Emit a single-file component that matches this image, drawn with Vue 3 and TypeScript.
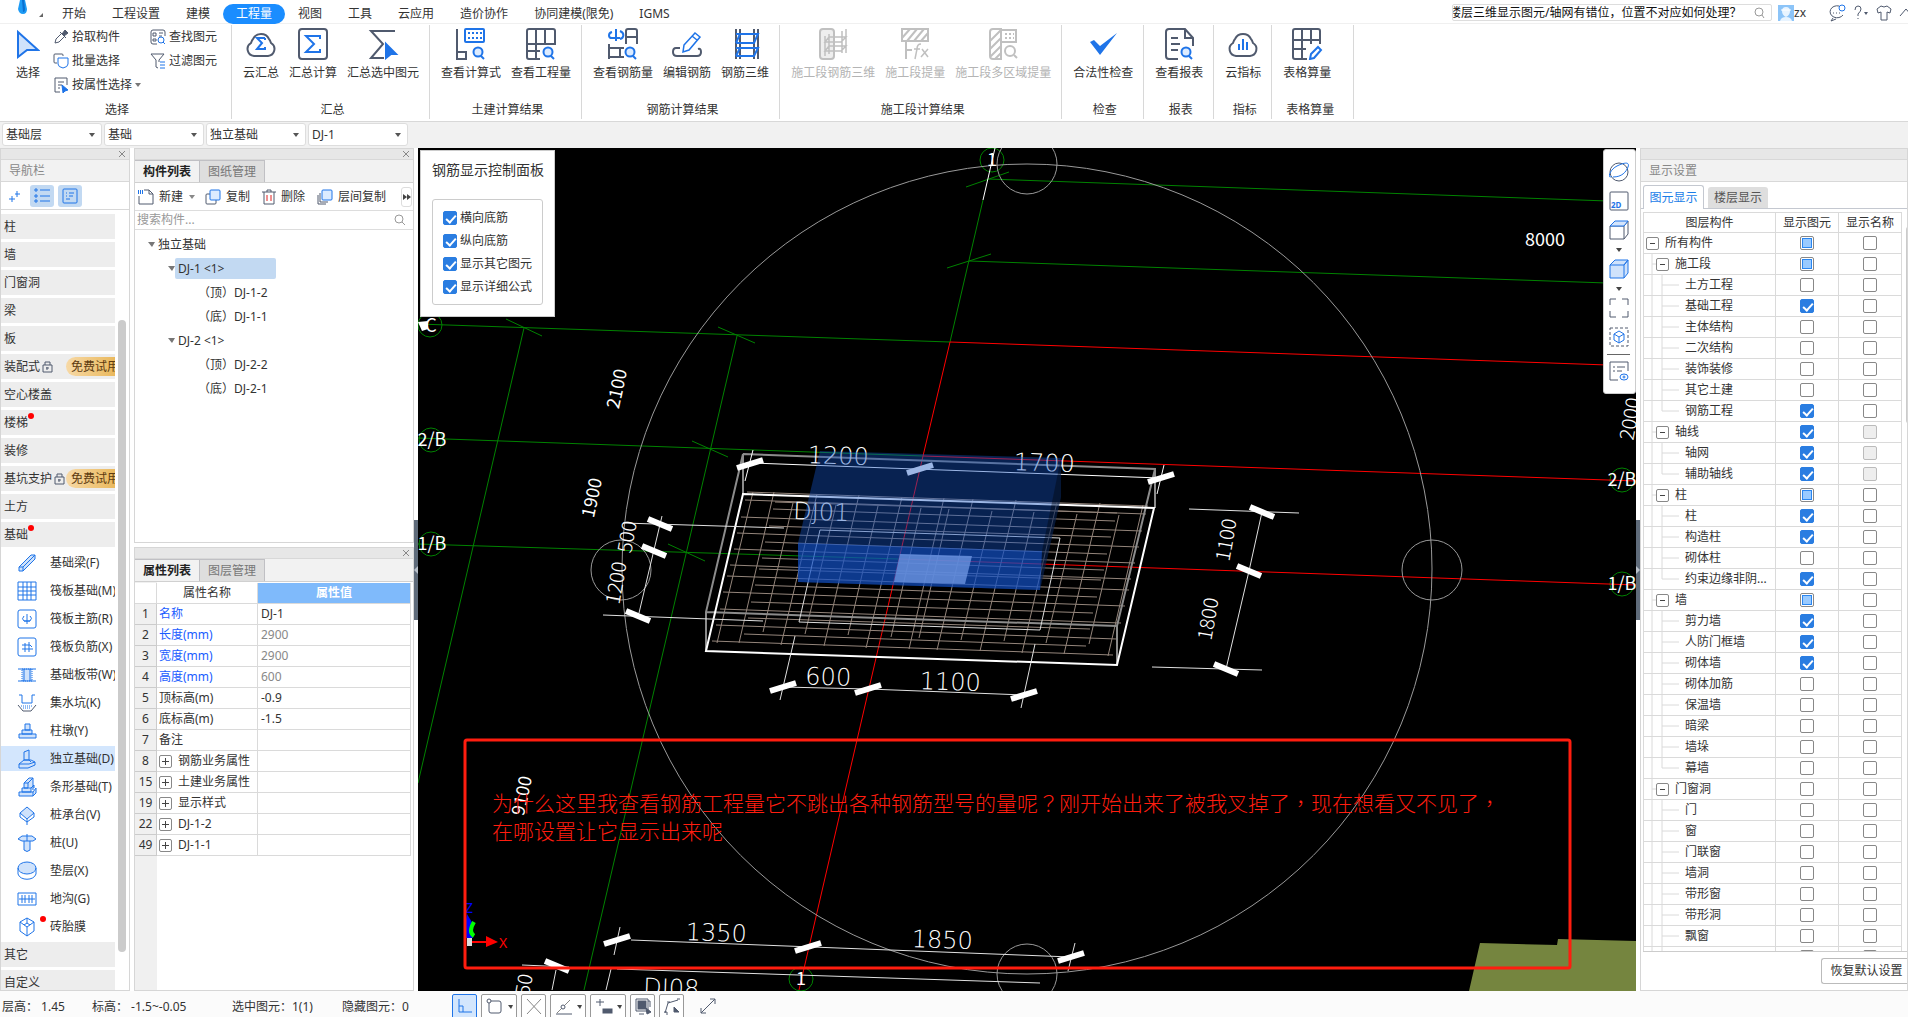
<script setup lang="ts">
import { ref } from 'vue'

interface Tool { label: string; icon: string }
interface Group { title: string; tools: Tool[]; disabled?: boolean }
interface NavItem { label: string; trial?: boolean; dot?: boolean }
interface SubItem { label: string; icon: string; active?: boolean; dot?: boolean }
interface Layer { name: string; level: number; shown: 0 | 1 | 2; locked?: boolean; last?: boolean }

const menus = ['开始', '工程设置', '建模', '工程量', '视图', '工具', '云应用', '造价协作', '协同建模(限免)', 'IGMS']
const activeMenu = ref('工程量')
const question = ref('楼层三维显示图元/轴网有错位，位置不对应如何处理？')

const lens = '<circle cx="23" cy="24" r="4.5" stroke="#1f74e8" fill="#dcebff"/><path d="M26 28l3 3" stroke="#1f74e8"/>'
const rebar = 'M7 1v30M11 1v30M25 1v30M29 1v30'

const icons: Record<string, string> = {
  cloudSum: '<path d="M9 28a7 7 0 0 1-3-13q1-3 2-4a9 9 0 0 1 16 0q1 1 2 4a7 7 0 0 1-3 13z"/><path d="M20 10h-8l5 5-5 6h8v-2M20 10v2" stroke="#1f74e8"/>',
  sum: '<rect x="2" y="1" width="28" height="30" rx="3"/><path d="M23 11V8H9l8 8-8 8h14v-3" stroke="#1f74e8"/>',
  sumPick: '<path d="M28 3H4l12 13L4 30h13"/><path d="M19 16l10 10h-5l-5 4z" fill="#1f74e8" stroke="#1f74e8"/>',
  formula: '<path d="M2 1v30h9v-7H2"/><rect x="10" y="1" width="19" height="13" rx="1" stroke="#1f74e8"/><path d="M13 5h14M13 10h14" stroke="#1f74e8" stroke-dasharray="2 2"/>' + lens,
  quantity: '<path d="M15 31H4a2 2 0 0 1-2-2V3a2 2 0 0 1 2-2h24a2 2 0 0 1 2 2v13H2M11 1v30M20 1v15M2 23h13"/>' + lens,
  rebarQty: '<path d="M9 1v12M5 4C1 5 1 10 5 10M13 3c5 2 4 7 0 8M5 10h8" stroke="#1f74e8"/><path d="M19 16V3q0-2 2-2h7q2 0 2 2v13M19 9h11M2 16v15M2 20h15M2 29h15M13 20v9"/>' + lens,
  rebarEdit: '<path d="M9 20H5q-3 0-3 4t4 4h20q4 0 4-4t-3-3"/><path d="M13 17L24 5l5 4-11 13-6 2zM21 8l5 4" stroke="#1f74e8" stroke-width="1.5"/>',
  rebar3d: `<path d="${rebar}"/><path d="M7 6h22l-4 9H7M7 20h22l-4 8H7M11 6l-4 9M11 20l-4 8" stroke="#1f74e8"/>`,
  stageRebar: '<rect x="3" y="1" width="14" height="30" rx="3" fill="#eee"/><path d="M8 8v20M12 6v20M25 3v22M29 1v24M12 9h17l-5 5H8l4-5M12 18h17l-5 5H8z" stroke-width="1.5"/>',
  stageQty: '<path d="M3 1h26v12H3zM3 10l8-9M8 13L18 1M15 13L25 1M22 13l7-8M7 13v18M7 22h6"/><path d="M22 16q-4 0-4 5l-2 10M15 21h6M23 21l6 8M29 21l-7 8" stroke-width="1.5"/>',
  stageArea: '<path d="M14 31H6a3 3 0 0 1-3-3V4a3 3 0 0 1 3-3h8zM3 13L14 2M3 21l11-11M3 29l11-11M8 31l6-6M14 2h15v12H14"/><path d="M18 6h9M18 10h9" stroke-dasharray="2 2"/><circle cx="23" cy="23" r="5"/><path d="M27 27l3 3"/>',
  check: '<path d="M3 14l4-2 6 6L30 5 13 27z" fill="#1f74e8" stroke="none"/>',
  report: '<path d="M15 31H6a3 3 0 0 1-3-3V4a3 3 0 0 1 3-3h16l8 9v8M22 2v8h8M8 10h7M8 16h9M8 22h7"/>' + lens,
  cloudBar: '<path d="M9 28a7 7 0 0 1-3-13q1-3 2-4a9 9 0 0 1 16 0q1 1 2 4a7 7 0 0 1-3 13z"/><path d="M12 16v6M16 11v11M20 14v8" stroke="#1f74e8"/>',
  sheet: '<path d="M16 31H4a2 2 0 0 1-2-2V3a2 2 0 0 1 2-2h23a2 2 0 0 1 2 2v13M2 12h27M2 21h13M11 1v30M20 1v15"/><path d="M20 26l7-7 3 3-7 8-4 1z" stroke="#1f74e8"/>',
}

const groups: Group[] = [
  { title: '汇总', tools: [{ label: '云汇总', icon: 'cloudSum' }, { label: '汇总计算', icon: 'sum' }, { label: '汇总选中图元', icon: 'sumPick' }] },
  { title: '土建计算结果', tools: [{ label: '查看计算式', icon: 'formula' }, { label: '查看工程量', icon: 'quantity' }] },
  { title: '钢筋计算结果', tools: [{ label: '查看钢筋量', icon: 'rebarQty' }, { label: '编辑钢筋', icon: 'rebarEdit' }, { label: '钢筋三维', icon: 'rebar3d' }] },
  { title: '施工段计算结果', disabled: true, tools: [{ label: '施工段钢筋三维', icon: 'stageRebar' }, { label: '施工段提量', icon: 'stageQty' }, { label: '施工段多区域提量', icon: 'stageArea' }] },
  { title: '检查', tools: [{ label: '合法性检查', icon: 'check' }] },
  { title: '报表', tools: [{ label: '查看报表', icon: 'report' }] },
  { title: '指标', tools: [{ label: '云指标', icon: 'cloudBar' }] },
  { title: '表格算量', tools: [{ label: '表格算量', icon: 'sheet' }] },
]

const smallTools: Tool[][] = [
  [
    { label: '拾取构件', icon: '<path d="M2 14l1-4 6-6 3 3-6 6zM7 3l6 6" /><path d="M9 5l3-4 3 3-4 3z" fill="#505a6e"/>' },
    { label: '批量选择', icon: '<path d="M4 10H2q-1 0-1-1V2q0-1 1-1h7q1 0 1 1v1"/><path d="M5 5h10v6q0 3-5 4-5-1-5-4z" stroke="#1f74e8"/>' },
    { label: '按属性选择', icon: '<path d="M7 15H2V1h12v7M5 5h6M5 8h4M5 11h2"/><path d="M9 8l6 5-3 1-2 2z" fill="#1f74e8" stroke="#1f74e8"/>' },
  ],
  [
    { label: '查找图元', icon: '<path d="M7 15H3q-2 0-2-2V3q0-2 2-2h10q2 0 2 2v4M3 4h3v3H3zM9 4h4M9 7h3M3 10h3v2H3z"/><circle cx="11" cy="11" r="3" stroke="#1f74e8"/><path d="M13 13l2 2" stroke="#1f74e8"/>' },
    { label: '过滤图元', icon: '<path d="M1 1h13L9 7v2M1 1l5 6v7l2 1"/><path d="M10 9h5M10 12h5M10 15h5" stroke="#1f74e8"/>' },
  ],
]

const filters = ['基础层', '基础', '独立基础', 'DJ-1']

const navItems: NavItem[] = [
  { label: '柱' }, { label: '墙' }, { label: '门窗洞' }, { label: '梁' }, { label: '板' },
  { label: '装配式', trial: true }, { label: '空心楼盖' }, { label: '楼梯', dot: true }, { label: '装修' },
  { label: '基坑支护', trial: true }, { label: '土方' }, { label: '基础', dot: true },
]
const subItems: SubItem[] = [
  { label: '基础梁(F)', icon: '<path d="M2 14L14 2h4v4L6 18H2zM2 14h4v4M6 14L18 2"/>' },
  { label: '筏板基础(M)', icon: '<path d="M1 1h18v18H1zM1 6h18M1 10h18M1 14h18M6 1v18M10 1v18M14 1v18" fill="none"/>' },
  { label: '筏板主筋(R)', icon: '<rect x="1" y="1" width="18" height="18" rx="2" fill="none"/><path d="M10 5v10M7 7q-3 3 0 5h6q3-3 0-5M7 12h6" fill="none"/>' },
  { label: '筏板负筋(X)', icon: '<rect x="1" y="1" width="18" height="18" rx="2" fill="none"/><path d="M5 8h8l2 2M5 12h11M8 6v9M12 5v10" fill="none"/>' },
  { label: '基础板带(W)', icon: '<path d="M5 4h10v12H5z" stroke-dasharray="1 1"/><path d="M1 4h18M1 16h18M7 4v12M13 4v12" fill="none"/>' },
  { label: '集水坑(K)', icon: '<path d="M2 2h3v8h10V2h3" fill="none"/><path d="M1 12l5 6h8l5-6" fill="none" stroke="#505a6e"/><path d="M4 13h12M6 15h8" stroke-dasharray="1 1"/>' },
  { label: '柱墩(Y)', icon: '<path d="M8 3h5v6H8zM5 9h10v4H5zM2 13h17v4H2z"/>' },
  { label: '独立基础(D)', icon: '<path d="M7 3l5-2v10H7zM2 15l5-4h7l4 2v3l-7 3H2z"/><path d="M2 15h10l6-2M12 11l2 2" fill="none"/>', active: true },
  { label: '条形基础(T)', icon: '<path d="M7 6l5-5h4v12M7 6h4v5H7zM5 11h9v4H5zM2 15h14v4H2zM16 15l3-4v5l-3 3M14 11l3-3v3M11 6l5-5"/>' },
  { label: '桩承台(V)', icon: '<path d="M10 2l7 6-7 6-7-6z" /><path d="M3 8v4l7 5 7-5V8M10 14v6" fill="none"/>' },
  { label: '桩(U)', icon: '<path d="M1 6l4-3h10l4 3-3 2H5zM7 8v9q3 3 6 0V8"/><path d="M10 1v7" fill="none"/>' },
  { label: '垫层(X)', icon: '<ellipse cx="10" cy="7" rx="9" ry="6"/><path d="M1 7v6c2 7 16 7 18 0V7" fill="none"/>' },
  { label: '地沟(G)', icon: '<path d="M1 4h18v12H1zM5 6v8M8 6v8M12 6v8M15 6v8M2 10h16" fill="none"/>' },
  { label: '砖胎膜', icon: '<path d="M10 1l7 4v9l-7 5-7-5V5zM3 5l7 5 7-5M10 10v9M10 1v5M7 8l3-2 3 2" fill="none"/>', dot: true },
]
const tailItems = ['其它', '自定义']

const tree = [
  { text: '独立基础', level: 0 },
  { text: 'DJ-1 <1>', level: 1, selected: true },
  { text: '（顶）DJ-1-2', level: 2 },
  { text: '（底）DJ-1-1', level: 2 },
  { text: 'DJ-2 <1>', level: 1 },
  { text: '（顶）DJ-2-2', level: 2 },
  { text: '（底）DJ-2-1', level: 2 },
]

const props = [
  { no: 1, name: '名称', value: 'DJ-1', key: true },
  { no: 2, name: '长度(mm)', value: '2900', key: true, dim: true },
  { no: 3, name: '宽度(mm)', value: '2900', key: true, dim: true },
  { no: 4, name: '高度(mm)', value: '600', key: true, dim: true },
  { no: 5, name: '顶标高(m)', value: '-0.9' },
  { no: 6, name: '底标高(m)', value: '-1.5' },
  { no: 7, name: '备注', value: '' },
  { no: 8, name: '钢筋业务属性', value: '', group: true },
  { no: 15, name: '土建业务属性', value: '', group: true },
  { no: 19, name: '显示样式', value: '', group: true },
  { no: 22, name: 'DJ-1-2', value: '', group: true },
  { no: 49, name: 'DJ-1-1', value: '', group: true },
]

const rebarOptions = ['横向底筋', '纵向底筋', '显示其它图元', '显示详细公式']

const L = (name: string, level: number, shown: 0 | 1 | 2, extra: Partial<Layer> = {}): Layer => ({ name, level, shown, ...extra })
const layers: Layer[] = [
  L('所有构件', 0, 2), L('施工段', 1, 2), L('土方工程', 2, 0), L('基础工程', 2, 1), L('主体结构', 2, 0), L('二次结构', 2, 0),
  L('装饰装修', 2, 0), L('其它土建', 2, 0), L('钢筋工程', 2, 1, { last: true }),
  L('轴线', 1, 1, { locked: true }), L('轴网', 2, 1, { locked: true }), L('辅助轴线', 2, 1, { locked: true, last: true }),
  L('柱', 1, 2), L('柱', 2, 1), L('构造柱', 2, 1), L('砌体柱', 2, 0), L('约束边缘非阴...', 2, 1, { last: true }),
  L('墙', 1, 2), L('剪力墙', 2, 1), L('人防门框墙', 2, 1), L('砌体墙', 2, 1), L('砌体加筋', 2, 0), L('保温墙', 2, 0),
  L('暗梁', 2, 0), L('墙垛', 2, 0), L('幕墙', 2, 0, { last: true }),
  L('门窗洞', 1, 0), L('门', 2, 0), L('窗', 2, 0), L('门联窗', 2, 0), L('墙洞', 2, 0), L('带形窗', 2, 0), L('带形洞', 2, 0),
  L('飘窗', 2, 0), L('', 2, 0),
]

const viewTools = [
  { name: '动态观察', icon: '<circle cx="10" cy="10" r="9"/><path d="M3 14C-2 18 0 8 8 4s13-4 11 1-6 10-15 10" stroke="#1f74e8"/>' },
  { name: '二维', icon: '<rect x="1" y="1" width="18" height="18" rx="1"/><text x="2" y="17" font-size="8" font-weight="700" fill="#1f74e8" stroke="none">2D</text>' },
  { name: '视图方向', more: true, icon: '<path d="M1 6h14v13H1zM15 6l4-5v13l-4 5"/><path d="M1 6l5-5h13l-4 5z" fill="#d5e5fb" stroke="#1f74e8"/>' },
  { name: '显示模式', more: true, icon: '<path d="M1 6h14v13H1zM15 6l4-5v13l-4 5M1 6l5-5h13l-4 5" fill="#cfe2fb" stroke="#1f74e8"/>' },
  { name: '全屏', icon: '<path d="M1 7V1h6M13 1h6v6M19 13v6h-6M7 19H1v-6"/>' },
  { name: '局部三维', icon: '<rect x="1" y="1" width="18" height="18" stroke-dasharray="3 2"/><path d="M10 4l5 3v6l-5 3-5-3V7zM5 7l5 3 5-3M10 10v6" stroke="#1f74e8"/>' },
]

const bottomTools = [
  { on: true, icon: '<path d="M3 1v13h13M3 8h4v6" stroke="#1f74e8"/>' },
  { more: true, icon: '<rect x="3" y="3" width="12" height="12" rx="2"/><circle cx="3" cy="3" r="2" fill="#fff"/>' },
  { icon: '<path d="M2 1l14 15M16 1L2 16" stroke="#888"/>' },
  { more: true, icon: '<path d="M2 15L15 2" stroke="#888"/><path d="M1 16h16"/><circle cx="8" cy="9" r="2" fill="#fff"/>' },
  { more: true, icon: '<path d="M1 4h8M5 1v7"/><rect x="8" y="11" width="9" height="4" fill="#505a6e"/>' },
  { icon: '<path d="M14 3h2v6M5 16h5M2 1h12v12H2z"/><rect x="4" y="3" width="8" height="8" fill="#505a6e"/><path d="M12 10l5 4-4 2z" fill="#505a6e"/>' },
  { icon: '<path d="M2 15l3-10 10-3M1 14h3v3M4 4h3M14 1h3"/><path d="M11 9l5 5h-5z" fill="#505a6e"/>' },
]

// Rebar mesh of the selected footing, in scene coordinates.
const fx = (x: number) => Math.round(660 + x / 2.45)
const fy = (y: number) => Math.round(430 + y / 3)
const seg = (a: number, b: number, c: number, d: number) => `M${fx(a)} ${fy(b)}L${fx(c)} ${fy(d)}`
const meshPath = [
  ...[186, 211, 260, 308, 357, 406, 438, 487, 537, 585, 634].map((y) => {
    const x = 208 - (y - 211) * 0.19
    return seg(x, y, x + 983, y + 42)
  }),
  ...[215, 238, 287, 336, 385, 416, 466, 515, 563, 612].map((y) => {
    const x = 281 - (y - 215) * 0.19
    return seg(x, y, x + 838, y + 35)
  }),
  ...[227, 280, 384, 488, 592, 697, 766, 871, 973, 1078, 1184].map((x) => {
    const y = 185 + (x - 227) * 0.041
    return seg(x, y, x - 87, y + 453)
  }),
  ...[252, 355, 460, 565, 634, 738, 842, 946, 1050].map((x) => {
    const y = 607 + (x - 252) * 0.045
    return seg(x + 75, y - 387, x, y)
  }),
].join('')

const circles = [[1027, 164], [621, 570], [1432, 570], [1027, 974]]
const bubbles = [[430, 325], [431, 440], [431, 544], [992, 160], [801, 979], [1622, 480], [1622, 584]]
const slashes = [[750, 464], [920, 469], [1161, 478], [783, 687], [868, 689], [1024, 695], [617, 940], [808, 947], [1071, 957]]
const backslashes = [[1262, 512], [1249, 571], [1226, 669], [660, 524], [654, 551], [638, 616], [557, 966]]
const slashPath = slashes.map(([x, y]) => `M${x - 13} ${y + 4}l26-8`).join('') + backslashes.map(([x, y]) => `M${x - 12} ${y - 5}l24 10`).join('')
const axisLabels = [
  { t: 'C', x: 431, y: 332, r: 0 }, { t: '2/B', x: 432, y: 446, r: 0 }, { t: '1/B', x: 432, y: 550, r: 0 },
  { t: '1', x: 992, y: 166, r: 0 }, { t: '1', x: 801, y: 985, r: 0 }, { t: '2/B', x: 1622, y: 486, r: 0 }, { t: '1/B', x: 1622, y: 590, r: 0 },
  { t: '8000', x: 1545, y: 246, r: 0 },
  { t: '2100', x: 623, y: 390, r: -78 }, { t: '1900', x: 598, y: 499, r: -78 }, { t: '9100', x: 528, y: 797, r: -78 },
]
const dimLabels = [
  { t: '1200', x: 838, y: 464, r: 2 }, { t: '1700', x: 1044, y: 471, r: 2 }, { t: 'DJ01', x: 821, y: 520, r: 2 },
  { t: '600', x: 828, y: 685, r: 2 }, { t: '1100', x: 950, y: 690, r: 2 },
  { t: '1350', x: 716, y: 941, r: 2 }, { t: '1850', x: 942, y: 948, r: 2 }, { t: 'DJ08', x: 671, y: 996, r: 2 },
  { t: '1100', x: 1233, y: 541, r: -80 }, { t: '1800', x: 1215, y: 620, r: -80 },
  { t: '500', x: 634, y: 538, r: -80 }, { t: '1200', x: 623, y: 584, r: -80 }, { t: '650', x: 530, y: 991, r: -80 }, { t: '2000', x: 1637, y: 420, r: -80 },
]
</script>

<template>
  <div class="app">
    <header class="top">
      <svg class="logo" width="49" height="23" viewBox="0 0 49 23" aria-hidden="true">
        <path d="M20 0h5l2 9q0 5-4 5t-5-5z" fill="#1d9bf5" /><path d="M22 0h2l1 9q0 3-2 3z" fill="#0a6fd0" />
        <path d="M43 13v4h-4z" fill="#666" />
      </svg>
      <nav class="menu">
        <button v-for="m in menus" :key="m" :class="{ on: m === activeMenu }" @click="activeMenu = m">{{ m }}</button>
      </nav>
      <div class="search">
        <input v-model="question" type="text" aria-label="搜索问题" />
        <svg class="ln" width="14" height="14" viewBox="0 0 14 14" stroke="#aaa"><circle cx="7" cy="6" r="4" /><path d="M10 9l2 3" /></svg>
      </div>
      <div class="user">
        <svg width="16" height="16" viewBox="0 0 16 16"><path d="M0 0h16v16H0z" fill="#8cc4f8" /><path d="M4 6a4 4 0 0 1 8 0q0 4-4 6-4-2-4-6M2 16q1-4 6-4t6 4z" fill="#e8f4ff" /><path d="M3 5h10" stroke="#fff" /></svg>
        <span>zx</span>
      </div>
      <div class="corner">
        <svg class="ln" width="18" height="18" viewBox="0 0 18 18"><path d="M11 2a7 6 0 1 0 4 9M5 14l-2 3 5-2" /><path d="M5 9h1M8 9h1M11 9h1" /><circle cx="14" cy="4" r="3" stroke="#1f74e8" /></svg>
        <svg class="ln" width="16" height="18" viewBox="0 0 16 18"><path d="M2 6q0-4 3-4t3 3q0 2-3 5v2M5 14v1" /><path d="M11 8h4l-2 3z" fill="#505a6e" stroke="none" /></svg>
        <svg class="ln" width="16" height="18" viewBox="0 0 16 18"><path d="M5 2q3 2 6 0l4 3-1 4-3-1v8H5V8L2 9 1 5z" /></svg>
        <svg class="ln" width="9" height="18" viewBox="0 0 9 18"><path d="M1 12l6-7 6 7" /></svg>
      </div>
    </header>

    <section class="ribbon">
      <div class="group first">
        <div class="tools">
          <button class="tool pick">
            <svg width="24" height="30" viewBox="0 0 24 30"><path d="M2 3l20 18H11l-9 7z" fill="#cfe2fb" stroke="#1f74e8" stroke-width="2" /></svg>
            <span>选择</span>
          </button>
          <div v-for="(col, i) in smallTools" :key="i" class="col">
            <button v-for="t in col" :key="t.label" class="small">
              <svg class="ln" width="16" height="16" viewBox="0 0 16 16" v-html="t.icon"></svg>{{ t.label }}
              <svg v-if="t.label === '按属性选择'" width="6" height="4"><path d="M0 0h6L3 4z" fill="#777" /></svg>
            </button>
          </div>
        </div>
        <div class="gtitle">选择</div>
      </div>
      <div v-for="g in groups" :key="g.title" class="group" :class="{ off: g.disabled }">
        <div class="tools">
          <button v-for="t in g.tools" :key="t.label" class="tool" :disabled="g.disabled">
            <svg class="ln big" width="32" height="32" viewBox="0 0 32 32" v-html="icons[t.icon]"></svg>
            <span>{{ t.label }}</span>
          </button>
        </div>
        <div class="gtitle">{{ g.title }}</div>
      </div>
    </section>

    <div class="filters">
      <div v-for="f in filters" :key="f" class="filter">
        <select :aria-label="f"><option>{{ f }}</option></select>
        <svg width="6" height="4"><path d="M0 0h6L3 4z" fill="#555" /></svg>
      </div>
    </div>

    <main class="work">
      <aside class="panel nav">
        <div class="strip"><button aria-label="关闭"><svg width="8" height="8" viewBox="0 0 8 8"><path d="M1 1l6 6M7 1L1 7" stroke="#888" /></svg></button></div>
        <div class="ptitle">导航栏</div>
        <div class="navbar">
          <button aria-label="展开"><svg class="bl" width="12" height="12" viewBox="0 0 12 12"><path d="M0 9h6M3 6v6M6 4h5M8 1v6" /></svg></button>
          <button class="on" aria-label="列表"><svg class="bl" width="16" height="16" viewBox="0 0 16 16"><path d="M1 1h2v2H1zM1 7h2v2H1zM1 12h2v2H1zM6 2h10M6 8h10M6 13h10" /></svg></button>
          <button class="on" aria-label="卡片"><svg class="bl" width="16" height="16" viewBox="0 0 16 16"><rect x="1" y="1" width="14" height="14" rx="1" /><path d="M4 5h1M7 5h5M4 8h1M7 8h4M4 11h4" /></svg></button>
        </div>
        <div class="navbody">
          <div class="navlist">
            <button v-for="n in navItems" :key="n.label" class="cat">
              <span>{{ n.label }}<i v-if="n.dot" class="dot"></i></span>
              <svg v-if="n.trial" class="ln" width="11" height="12" viewBox="0 0 11 12"><path d="M1 4h9v7H1zM3 4V1h5v3M5 6v3M4 7h3" /></svg>
              <em v-if="n.trial">免费试用</em>
            </button>
            <button v-for="s in subItems" :key="s.label" class="sub" :class="{ on: s.active }">
              <svg width="20" height="20" viewBox="0 0 20 20" fill="#cfe2fb" stroke="#1f74e8" v-html="s.icon"></svg>
              <i v-if="s.dot" class="dot"></i>
              <span>{{ s.label }}</span>
            </button>
            <button v-for="n in tailItems" :key="n" class="cat"><span>{{ n }}</span></button>
          </div>
          <div class="navscroll"><div></div></div>
        </div>
      </aside>

      <div class="mid">
        <section class="panel comps">
          <div class="strip"><button aria-label="关闭"><svg width="8" height="8" viewBox="0 0 8 8"><path d="M1 1l6 6M7 1L1 7" stroke="#888" /></svg></button></div>
          <div class="tabs"><button class="on">构件列表</button><button>图纸管理</button></div>
          <div class="actions">
            <button><svg class="ln" width="16" height="16" viewBox="0 0 16 16"><path d="M6 1h5l4 4v10H1V7M11 1v4h4" /><path d="M0 2h5M0 4h5" stroke="#1f74e8" stroke-width="2" stroke-dasharray="1 1" /></svg>新建</button>
            <svg class="tri" width="6" height="4"><path d="M0 0h6L3 4z" fill="#888" /></svg>
            <button><svg class="ln" width="16" height="16" viewBox="0 0 16 16"><path d="M5 5H2q-1 0-1 1v8q0 1 1 1h8q1 0 1-1v-3" /><rect x="5" y="1" width="10" height="10" rx="1" fill="#dcebff" stroke="#1f74e8" /></svg>复制</button>
            <button><svg class="ln" width="14" height="16" viewBox="0 0 14 16"><path d="M0 3h14M2 3v12h10V3M5 3V1h4v2" /><path d="M5 6v6M9 6v6" stroke="#e02020" /></svg>删除</button>
            <button><svg class="ln" width="16" height="16" viewBox="0 0 16 16"><path d="M1 6v9h8M3 4v9h8" /><rect x="5" y="1" width="10" height="10" rx="1" fill="#dcebff" stroke="#1f74e8" /></svg>层间复制</button>
            <button class="more" aria-label="更多"><svg width="8" height="6"><path d="M0 0l4 3-4 3zM4 0l4 3-4 3z" fill="#444" /></svg></button>
          </div>
          <div class="find">
            <input type="text" placeholder="搜索构件..." aria-label="搜索构件" />
            <svg class="ln" width="12" height="12" viewBox="0 0 12 12" stroke="#999"><circle cx="5" cy="5" r="4" /><path d="M8 8l3 3" /></svg>
          </div>
          <ul class="tree">
            <li v-for="(t, i) in tree" :key="i" :class="['lv' + t.level, { on: t.selected }]">
              <svg v-if="t.level < 2" width="7" height="5"><path d="M0 0h7L4 5z" fill="#777" /></svg>
              <span>{{ t.text }}</span>
            </li>
          </ul>
        </section>

        <section class="panel props">
          <div class="strip"><button aria-label="关闭"><svg width="8" height="8" viewBox="0 0 8 8"><path d="M1 1l6 6M7 1L1 7" stroke="#888" /></svg></button></div>
          <div class="tabs"><button class="on">属性列表</button><button>图层管理</button></div>
          <div class="sheet">
            <table>
              <thead><tr><th class="no"></th><th class="pn">属性名称</th><th class="pv">属性值</th></tr></thead>
              <tbody>
                <tr v-for="p in props" :key="p.no">
                  <td class="no">{{ p.no }}</td>
                  <td :class="{ key: p.key }"><div class="cell"><button v-if="p.group" class="exp" aria-label="展开"><svg width="7" height="7"><path d="M0 3h7v1H0zM3 0h1v7H3z" fill="#444" /></svg></button>{{ p.name }}</div></td>
                  <td :class="{ dim: p.dim }">{{ p.value }}</td>
                </tr>
              </tbody>
            </table>
          </div>
        </section>
        <div class="grip left"><div><svg width="4" height="8"><path d="M4 0v8L0 4z" fill="#b8c0ca" /></svg></div></div>
      </div>

      <section class="view">
        <svg class="scene" viewBox="418 148 1218 843" preserveAspectRatio="xMidYMid slice" fill="none">
          <path d="M1480 943l77 2 1-6 78 2v50H1469z" fill="#75853f" />
          <g stroke="#008200">
            <path d="M418 324L950 342M418 438L923 456M418 544L899 559M524 328L418 783M737 336L584 990M983 200L950 342M988 179L1636 202M969 261L1636 284" />
            <path d="M966 187l43-15M947 268l44-14M506 319l36 17M718 327l37 16M692 441l36 16M668 544l37 17" />
            <circle v-for="b in bubbles" :key="b.join()" :cx="b[0]" :cy="b[1]" r="12" />
          </g>
          <path d="M950 342L1636 366M923 456L1636 481M899 559L1636 585M950 342L923 456L899 559L799 990" stroke="#ff0000" />
          <g stroke="#999">
            <circle cx="1027" cy="569" r="405" />
            <circle v-for="c in circles" :key="c.join()" :cx="c[0]" :cy="c[1]" r="30" />
          </g>
          <path :d="meshPath" stroke="#94857b" />
          <path d="M743 454L1155 469V508M743 494V454L706 612V651M706 612L1117 626V665M1155 469L1117 626" stroke="#8c8c8c" stroke-width="2" />
          <path d="M743 494L1154 508L1117 665L706 651Z" stroke="#fff" stroke-width="2" />
          <path d="M820 530L1060 538L1040 630L799 622Z" stroke="#ddd" />
          <g stroke="#e0e0e0">
            <path d="M995 148L983 200M752 463L1160 478M753 450l-8 31M1164 465l-7 29" stroke="#fff" />
            <path d="M1262 512L1249 571L1226 669M1189 509l110 4M1152 667l110 3" />
            <path d="M783 687L868 689L1024 695M795 636l-15 64M1035 644l-14 64" />
            <path d="M623 523L784 528M603 615L763 621M662 516L639 613" />
            <path d="M631 940L1071 957M620 927l-6 28M1075 943l-7 28M522 965l47 2M556 970l-4 20M617 969L1040 983M611 969l-5 21" />
          </g>
          <path :d="slashPath" stroke="#fff" stroke-width="6" />
          <path d="M418 322l10-1v8l-6 2z" fill="#fff" />
          <g class="dims"><text v-for="(d, i) in dimLabels" :key="i" :x="d.x" :y="d.y" :class="{ upright: d.r < 0 }" :transform="`rotate(${d.r} ${d.x} ${d.y})`">{{ d.t }}</text></g>
          <g class="axes"><text v-for="(d, i) in axisLabels" :key="i" :x="d.x" :y="d.y" :transform="`rotate(${d.r} ${d.x} ${d.y})`">{{ d.t }}</text></g>
          <path d="M820 451L1061 458V497L1040 590L798 582V543Z" fill="#1250c0" fill-opacity=".42" />
          <path d="M1061 458V497L1040 590L1042 551Z" fill="#000" fill-opacity=".35" />
          <path d="M798 543L1042 551L1040 590L798 582Z" fill="#1250c8" fill-opacity=".5" />
          <path d="M900 554L972 556L965 584L894 582Z" fill="#6b94e0" fill-opacity=".8" />
          <path d="M467 914l6 10v14h-8v-13z" fill="#00f" /><path d="M474 922q-6 10 0 14" stroke="#0f0" stroke-width="4" />
          <path d="M467 938h5v8h-5z" fill="#ddd" /><path d="M472 941h14v-5l12 6-12 5v-4h-14z" fill="#f00" />
          <text class="zx" x="465" y="913" fill="#00f">Z</text><text class="zx" x="499" y="948" fill="#f00">X</text>
          <rect x="465" y="740" width="1105" height="228" rx="2" stroke="#ff1d0f" stroke-width="3" />
          <g class="note">
            <text x="492" y="811">为什么这里我查看钢筋工程量它不跳出各种钢筋型号的量呢<tspan class="tc">？</tspan>刚开始出来了被我叉掉了<tspan class="tc">，</tspan>现在想看又不见了<tspan class="tc">，</tspan></text>
            <text x="492" y="839">在哪设置让它显示出来呢</text>
          </g>
        </svg>

        <div class="rebarbox">
          <h2>钢筋显示控制面板</h2>
          <div class="opts">
            <label v-for="o in rebarOptions" :key="o"><input type="checkbox" checked />{{ o }}</label>
          </div>
        </div>

        <div class="viewbar">
          <button v-for="v in viewTools" :key="v.name" :class="{ tall: v.more }" :aria-label="v.name">
            <svg class="ln" width="20" height="20" viewBox="0 0 20 20" v-html="v.icon"></svg>
            <svg v-if="v.more" width="6" height="4"><path d="M0 0h6L3 4z" fill="#444" /></svg>
          </button>
          <hr />
          <button aria-label="显示设置"><svg class="ln" width="20" height="20" viewBox="0 0 20 20"><path d="M9 19H1V1h18v9M4 6h2M8 6h8M4 10h2M8 10h5" /><ellipse cx="15" cy="16" rx="4" ry="3" stroke="#1f74e8" /><circle cx="15" cy="16" r="1" stroke="#1f74e8" /></svg></button>
        </div>
      </section>

      <div class="grip right"><div><svg width="4" height="8"><path d="M0 0v8l4-4z" fill="#b8c0ca" /></svg></div></div>

      <aside class="panel display">
        <div class="strip"></div>
        <div class="ptitle">显示设置</div>
        <div class="rtabs"><button class="on">图元显示</button><button>楼层显示</button></div>
        <div class="layers">
          <table>
            <thead><tr><th class="lname">图层构件</th><th>显示图元</th><th>显示名称</th></tr></thead>
            <tbody>
              <tr v-for="(l, i) in layers" :key="i">
                <td>
                  <div class="lrow" :class="'d' + l.level">
                    <svg v-if="l.level === 1" width="12" height="20"><path d="M8 0v20M8 10h4" /></svg>
                    <svg v-if="l.level === 2" width="35" height="20"><path :d="l.last ? 'M8 0v20M18 0v10h17' : 'M8 0v20M18 0v20M18 10h17'" /></svg>
                    <button v-if="l.level < 2" class="exp" aria-label="折叠"><svg width="7" height="7"><path d="M1 3h5v1H1z" fill="#444" stroke="none" /></svg></button>
                    <span>{{ l.name }}</span>
                  </div>
                </td>
                <td class="c"><input type="checkbox" :aria-label="l.name + '显示图元'" :checked="l.shown === 1" :indeterminate="l.shown === 2" /></td>
                <td class="c"><input type="checkbox" :aria-label="l.name + '显示名称'" :disabled="l.locked" /></td>
              </tr>
            </tbody>
          </table>
          <div class="thumb"></div>
        </div>
        <div class="foot"><button>恢复默认设置</button></div>
      </aside>
    </main>

    <footer class="status">
      <span class="s1">层高： 1.45</span><span class="s2">标高： -1.5~-0.05</span><span class="s3">选中图元：1(1)</span><span class="s4">隐藏图元：0</span>
      <div class="btools">
        <button v-for="(b, i) in bottomTools" :key="i" :class="{ on: b.on, wide: b.more }" :aria-label="'捕捉' + (i + 1)">
          <svg class="ln" width="18" height="18" viewBox="0 0 18 18" v-html="b.icon"></svg>
          <svg v-if="b.more" width="5" height="4"><path d="M0 0h5L3 4z" fill="#444" /></svg>
        </button>
        <svg class="ln full" width="16" height="16" viewBox="0 0 16 16"><path d="M1 15L15 1M10 1h5v5M1 10v5h5" /></svg>
      </div>
    </footer>
  </div>
</template>

<style>
body { background: #fbfbfb; overflow: hidden; }
</style>

<style scoped>
.app { height: 100vh; display: flex; flex-direction: column; font: 12px/18px "Noto Sans", "Noto Sans CJK SC", sans-serif; color: #333; background: #fff; overflow: hidden; white-space: nowrap; }
.app * { box-sizing: border-box; }
button, input, select { font: inherit; color: inherit; background: none; border: 0; padding: 0; margin: 0; outline: 0; }
svg { flex: none; display: block; }
.ln { fill: none; stroke: #505a6e; }
.ln[stroke] { stroke: #999; }
.big { stroke-width: 2; }
.bl { fill: none; stroke: #1f74e8; }

.top { display: flex; height: 24px; flex: none; border-bottom: 1px solid #f0f0f0; align-items: center; }
.menu { display: flex; padding-top: 4px; }
.menu button { padding: 0 13px; height: 20px; line-height: 19px; border-radius: 10px; }
.menu button.on { background: #1a8dff; color: #fff; }
.search { margin-left: auto; flex: none; width: 320px; height: 17px; border: 1px solid #ddd; border-radius: 2px; display: flex; align-items: center; justify-content: space-between; padding-right: 5px; margin-top: 2px; }
.search input { width: 289px; line-height: 15px; height: 15px; text-indent: -4px; color: #111; }
.user { display: flex; align-items: center; margin: 2px 22px 0 6px; flex: none; }
.corner { display: flex; gap: 7px; margin-top: 2px; flex: none; }

.ribbon { display: flex; flex: none; height: 98px; padding-top: 1px; border-bottom: 1px solid #d8d8d8; }
.group { height: 94px; padding: 3px 10px 0 11px; border-right: 1px solid #d8d8d8; display: flex; flex-direction: column; justify-content: space-between; }
.group.first { width: 232px; padding: 0; }
.group:last-child { padding-right: 19px; }
.tools { display: flex; gap: 10px; }
.tool { display: flex; flex-direction: column; align-items: center; gap: 4px; }
.off .tool { color: #b4b4b4; }
.off .ln { stroke: #c0c0c0; }
.gtitle { text-align: center; padding-left: 3px; }
.first .tools { gap: 0; }
.pick { margin-left: 16px; width: 24px; padding-top: 4px; gap: 5px; align-self: flex-start; }
.col { margin-left: 13px; }
.col + .col { margin-left: 9px; }
.col .small { display: flex; align-items: center; gap: 3px; height: 24px; }

.filters { display: flex; gap: 2px; flex: none; height: 26px; padding: 1px 2px; background: #f1f1f1; }
.filter { width: 100px; height: 23px; border: 1px solid #ddd; border-radius: 3px; background: #fff; display: flex; align-items: center; padding-right: 6px; }
.filter select { appearance: none; flex: 1; padding-left: 3px; height: 20px; }

.work { flex: 1; min-height: 0; display: grid; grid-template-columns: 130px 288px minmax(0, 1fr) 4px 268px; }
.panel { border: 1px solid #d6d6d6; background: #fff; display: flex; flex-direction: column; min-height: 0; overflow: hidden; }
.strip { flex: none; height: 11px; background: #e7e7e7; border-bottom: 1px solid #d8d8d8; padding-right: 3px; }
.strip button { display: block; margin: 1px 0 0 auto; }
.ptitle { flex: none; height: 22px; line-height: 22px; padding-left: 8px; background: #f2f2f2; border-bottom: 1px solid #d8d8d8; color: #888; }
.navbar { display: flex; gap: 4px; flex: none; height: 28px; padding: 3px 0 0 5px; border-bottom: 1px solid #d8d8d8; }
.navbar button { width: 24px; height: 22px; border-radius: 3px; display: flex; align-items: center; justify-content: center; }
.navbar button:first-child { width: 20px; padding-right: 3px; }
.navbar .on { background: #c2d9f2; }
.navbody { flex: 1; min-height: 0; display: flex; padding-top: 4px; }
.navlist { width: 114px; display: flex; flex-direction: column; gap: 3px; overflow: hidden; }
.cat { flex: none; position: relative; height: 25px; background: #ededed; display: flex; align-items: center; padding-left: 3px; overflow: hidden; gap: 2px; }
.cat span { position: relative; }
.cat em { position: absolute; left: 65px; right: 0; top: 3px; font-style: normal; height: 19px; line-height: 19px; overflow: hidden; padding-left: 5px; border-radius: 10px 0 0 10px; background: linear-gradient(90deg, #f7d9a6, #eab95e); color: #5c3a10; text-align: left; }
.dot { width: 6px; height: 6px; border-radius: 3px; background: #f00; position: absolute; left: 24px; top: -1px; }
.sub { flex: none; position: relative; height: 25px; display: flex; align-items: center; gap: 13px; padding-left: 16px; overflow: hidden; text-align: left; }
.sub.on { background: #d3e6fd; }
.sub .dot { left: 39px; top: 2px; }
.navscroll { width: 14px; padding: 106px 2px 38px 3px; }
.navscroll div { height: 100%; width: 8px; border-radius: 4px; background: #cbcbcb; }

.mid { display: grid; grid-template-columns: 280px 4px; grid-template-rows: 395px minmax(0, 1fr); row-gap: 4px; padding-left: 4px; min-height: 0; }
.comps, .props { grid-column: 1; }
.grip { padding-top: 372px; background: #fff; }
.grip.left { grid-column: 2; grid-row: 1 / 3; }
.grip div { height: 100px; width: 4px; background: #5f6b7a; display: flex; align-items: center; }
.tabs { flex: none; display: flex; height: 23px; background: #f2f2f2; border-bottom: 1px solid #d0d0d0; }
.tabs button { width: 65px; border-right: 1px solid #c0c0c4; border-top: 1px solid #c0c0c4; background: #dedede; color: #777; }
.tabs .on { background: #f2f2f2; color: #222; font-weight: 700; }
.actions { flex: none; display: flex; align-items: center; gap: 12px; height: 28px; border-bottom: 1px solid #ddd; padding-left: 3px; }
.actions button { display: flex; align-items: center; gap: 5px; }
.actions .tri { margin-left: -6px; margin-right: -2px; }
.actions .more { margin-left: auto; width: 11px; height: 20px; border: 1px solid #ddd; border-radius: 3px; justify-content: center; margin-right: 1px; }
.find { flex: none; display: flex; align-items: center; height: 19px; border-bottom: 1px solid #ddd; padding: 0 7px 0 2px; }
.find input { flex: 1; height: 17px; }
.find input::placeholder { color: #999; }
.tree { list-style: none; margin: 0; padding: 2px 0 0; }
.tree li { height: 24px; display: flex; align-items: center; padding-left: 13px; }
.tree span { padding: 0 3px; height: 21px; line-height: 21px; border-radius: 2px; }
.tree .lv1 { padding-left: 33px; }
.tree .lv2 { padding-left: 60px; }
.tree .on span { width: 101px; background: #c2d9f2; }

.sheet { flex: 1; display: flex; padding: 1px 2px 0 0; background: linear-gradient(90deg, #f0f0f0 22px, #fff 22px); }
table { border-collapse: separate; border-spacing: 0; table-layout: fixed; align-self: flex-start; background: #fff; }
td, th { height: 21px; padding: 0; border-right: 1px solid #dadada; border-bottom: 1px solid #dadada; font-weight: 400; line-height: 20px; overflow: hidden; }
.sheet table { width: 276px; }
.sheet td { padding-left: 3px; }
.sheet .no { width: 22px; text-align: center; padding: 0; }
.sheet td.no { background: #f0f0f0; border-color: #ccc; }
.pn { width: 101px; }
.pv { background: #7fbafb; color: #fff; font-weight: 700; }
.sheet .key { color: #1a5cff; }
.sheet .dim { color: #888; }
.cell { display: flex; align-items: center; gap: 6px; margin-left: -1px; height: 20px; }
.exp { width: 13px; height: 13px; flex: none; border: 1px solid #888; border-radius: 2px; display: flex; align-items: center; justify-content: center; background: #fff; }

.view { position: relative; background: #000; overflow: hidden; }
.scene { position: absolute; inset: 0; width: 100%; height: 100%; }
.axes, .dims, .note { font-family: "Noto Sans CJK SC", sans-serif; }
.axes { font-size: 18px; fill: #fff; text-anchor: middle; }
.dims { font-family: "DejaVu Sans", sans-serif; font-weight: 200; font-size: 24px; fill: #fff; text-anchor: middle; }
.dims .upright { font-size: 20px; font-family: "Noto Sans CJK SC", sans-serif; font-weight: 300; }
.zx { font-size: 14px; }
.note { font-size: 21px; font-weight: 300; fill: #ff1d0f; }
.tc { font-family: "Noto Sans CJK TC", sans-serif; }
.rebarbox { position: absolute; left: 2px; top: 2px; background: #fff; border: 1px solid #ccc; padding: 9px 11px; width: 135px; height: 167px; }
.rebarbox h2 { margin: 0 0 19px; font-size: 14px; line-height: 20px; font-weight: 400; }
.opts { border: 1px solid #ccc; border-radius: 3px; width: 111px; height: 106px; padding: 6px 10px; }
.opts label { display: flex; align-items: center; gap: 3px; height: 23px; }

input[type="checkbox"] { appearance: none; flex: none; width: 14px; height: 14px; border: 1px solid #888; border-radius: 2px; background: #fff; position: relative; display: block; }
input[type="checkbox"]:disabled { background: #eee; border-color: #bbb; }
input[type="checkbox"]:checked { background: #2a7de1; border-color: #2a7de1; }
input[type="checkbox"]:checked::after { content: ""; position: absolute; left: 4px; top: 1px; width: 4px; height: 8px; border: solid #fff; border-width: 0 2px 2px 0; transform: rotate(42deg); }
input[type="checkbox"]:indeterminate::after { content: ""; position: absolute; inset: 1px; background: #99caff; border: 1px solid #2a86f0; }

.viewbar { position: absolute; right: 0; top: 1px; width: 33px; height: 245px; background: #fff; border: 1px solid #ccc; border-radius: 3px; padding: 7px 2px 0 0; display: flex; flex-direction: column; align-items: center; }
.viewbar button { height: 29px; flex: none; display: flex; flex-direction: column; align-items: center; padding-top: 5px; gap: 8px; }
.viewbar .tall { height: 39px; }
.viewbar hr { flex: none; width: 23px; border: 0; border-top: 1px solid #666; margin: 3px 0 1px; }

.rtabs { flex: none; display: flex; align-items: flex-end; gap: 4px; height: 27px; padding-left: 2px; border-bottom: 1px solid #c4c8d0; }
.rtabs button { width: 60px; height: 21px; background: #dedede; border-radius: 3px 3px 0 0; color: #555; }
.rtabs .on { width: 61px; height: 24px; background: #fff; border: 1px solid #c4c8d0; border-bottom: 0; margin-bottom: -1px; color: #1a7de8; }
.layers { flex: 1; min-height: 0; overflow: hidden; display: flex; margin: 3px 0 0 2px; border-bottom: 1px solid #ccc; }
.layers table { width: 259px; flex: none; border-left: 1px solid #dadada; border-top: 1px solid #dadada; }
.layers th { height: 20px; line-height: 19px; }
.lname { width: 132px; }
.lrow { display: flex; align-items: center; height: 20px; gap: 6px; }
.lrow svg { fill: none; stroke: #dadada; }
.d0 { padding-left: 2px; }
.d1 > svg { margin-right: -6px; }
.c input { margin: 0 auto; }
.thumb { margin: 14px 0 0 4px; width: 8px; height: 198px; flex: none; border-radius: 4px; background: #cbcbcb; }
.foot { flex: none; height: 38px; padding: 6px 0 0; overflow: hidden; display: flex; justify-content: flex-end; }
.foot button { width: 86px; height: 26px; border: 1px solid #bbb; border-right: 0; border-radius: 3px 0 0 3px; padding-left: 4px; }

.status { flex: none; height: 26px; background: #fbfbfb; display: flex; align-items: center; padding-left: 2px; padding-top: 3px; }
.status span { line-height: 26px; padding-top: 2px; }
.s1 { width: 90px; }
.s2 { width: 140px; }
.s3 { width: 110px; }
.s4 { width: 110px; }
.btools { display: flex; align-items: flex-start; gap: 4px; height: 23px; overflow: hidden; }
.btools button { width: 25px; height: 26px; border: 1px solid #999; border-radius: 2px; display: flex; align-items: center; justify-content: center; gap: 4px; background: #fff; }
.btools .wide { width: 36px; }
.btools .on { background: #d3e6fd; border-color: #1f74e8; }
.full { margin: 4px 0 0 12px; }
</style>
